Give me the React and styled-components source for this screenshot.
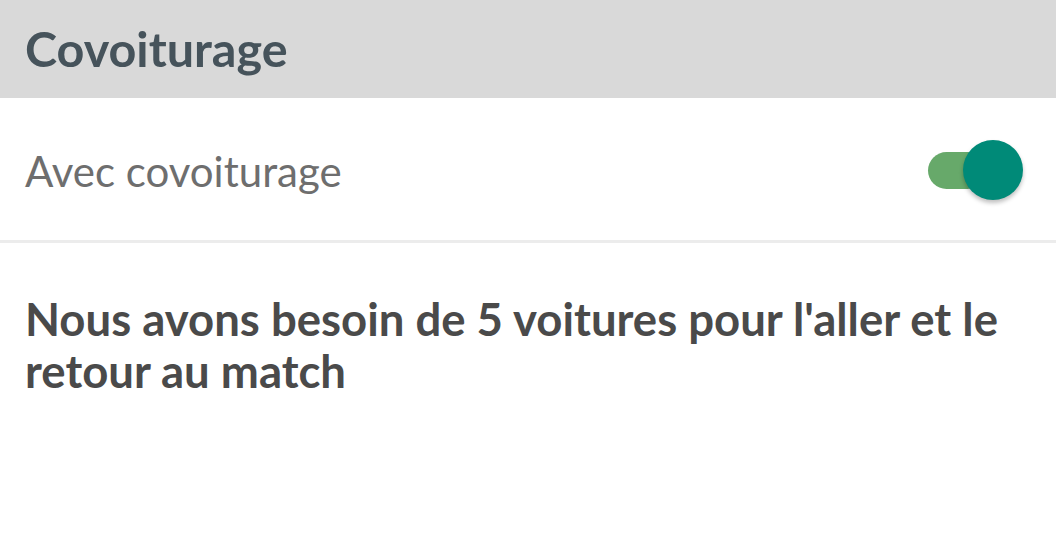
import React, { useState } from 'react';
import styled, { createGlobalStyle } from 'styled-components';

const GlobalStyle = createGlobalStyle`
  html, body {
    margin: 0;
    padding: 0;
    background: #ffffff;
    font-family: Lato, 'Noto Sans', sans-serif;
  }
`;

// composants
const Switch = ({ on, onToggle }) => (
  <Track on={on} onClick={onToggle}>
    <Knob on={on} />
  </Track>
);

const App = () => {
  const [carpool, setCarpool] = useState(true);

  return (
    <Page>
      <GlobalStyle />
      <SectionHeader>
        <h1>Covoiturage</h1>
      </SectionHeader>
      <Row>
        <span className='label'>Avec covoiturage</span>
        <Switch on={carpool} onToggle={() => setCarpool(!carpool)} />
      </Row>
      <Notice>Nous avons besoin de 5 voitures pour l'aller et le retour au match</Notice>
    </Page>
  );
};

export default App;

const Page = styled.div`
  width: 1056px;
  height: 552px;
  background: #ffffff;
  overflow: hidden;
`;

const SectionHeader = styled.div`
  height: 98px;
  background-color: #d9d9d9;
  display: flex;
  align-items: center;
  padding: 0 25px;
  box-sizing: border-box;
  h1 {
    margin: 0;
    margin-top: -2px;
    font-size: 48.5px;
    font-weight: 700;
    color: #46535b;
  }
`;

const Row = styled.div`
  height: 145px;
  display: flex;
  align-items: center;
  justify-content: space-between;
  padding: 0 33px 0 25px;
  border-bottom: 3px solid #ececec;
  box-sizing: border-box;
  .label {
    font-size: 42px;
    color: #6e6e6e;
    margin-top: 4px;
  }
`;

const Track = styled.div`
  position: relative;
  width: 58px;
  height: 37px;
  margin-right: 37px;
  margin-top: 2px;
  border-radius: 19px;
  background-color: ${props => (props.on ? '#67a96a' : '#bdbdbd')};
  cursor: pointer;
`;

const Knob = styled.div`
  position: absolute;
  top: 50%;
  left: ${props => (props.on ? '35px' : '-6px')};
  transform: translateY(-50%);
  width: 60px;
  height: 60px;
  border-radius: 50%;
  background-color: ${props => (props.on ? '#008a78' : '#fafafa')};
  box-shadow: 0 3px 4px rgba(0, 0, 0, 0.25);
`;

const Notice = styled.p`
  margin: 0;
  padding: 50px 50px 0 25px;
  font-size: 45.5px;
  font-weight: 700;
  line-height: 52px;
  color: #4a4a4a;
`;
